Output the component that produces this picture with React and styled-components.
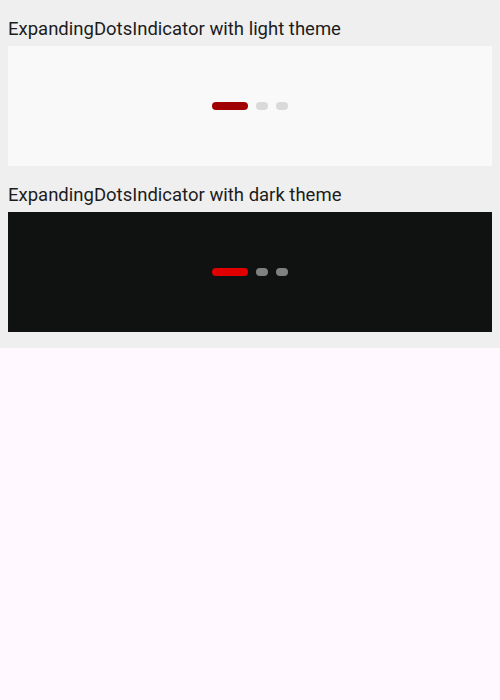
import React from 'react';
import styled, { createGlobalStyle } from 'styled-components';

const GlobalStyle = createGlobalStyle`
  body {
    margin: 0;
    background: #fff8ff;
    font-family: Roboto, "Liberation Sans", sans-serif;
  }
`;

const themes = {
  light: { bg: '#f9f9f9', active: '#a00000', dot: '#d9d9d9' },
  dark: { bg: '#101212', active: '#e00000', dot: '#808080' },
};

const Page = styled.div`
  background: #efefef;
  padding: 0 8px 16px;
`;

const Title = styled.div`
  font-size: 18.5px;
  line-height: 24px;
  color: #1c1c1c;
  padding-top: 17px;
  margin-bottom: 5px;
`;

const Panel = styled.div`
  height: 120px;
  background: ${(p) => p.$bg};
  display: flex;
  align-items: center;
  justify-content: center;
`;

const Dots = styled.div`
  display: flex;
  gap: 8px;
`;

const Dot = styled.div`
  width: ${(p) => (p.$active ? 36 : 12)}px;
  height: 8px;
  border-radius: 4px;
  background: ${(p) => p.$color};
`;

const Indicator = ({ theme, count = 3, current = 0 }) => {
  const t = themes[theme];
  return (
    <Panel $bg={t.bg}>
      <Dots>
        {Array.from({ length: count }).map((_, i) => (
          <Dot key={i} $active={i === current} $color={i === current ? t.active : t.dot} />
        ))}
      </Dots>
    </Panel>
  );
};

export default function App() {
  return (
    <>
      <GlobalStyle />
      <Page>
        <Title>ExpandingDotsIndicator with light theme</Title>
        <Indicator theme="light" />
        <Title>ExpandingDotsIndicator with dark theme</Title>
        <Indicator theme="dark" />
      </Page>
    </>
  );
}
